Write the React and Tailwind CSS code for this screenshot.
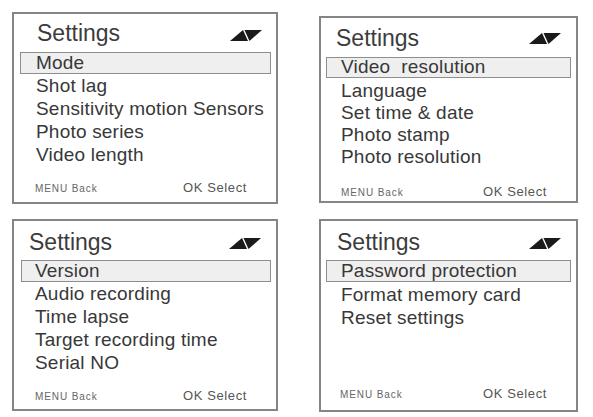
import React from 'react';

const font = { fontFamily: '"Liberation Sans", Arial, sans-serif' };

const panels = [
  {
    items: ['Mode', 'Shot lag', 'Sensitivity motion Sensors', 'Photo series', 'Video length'],
    box: 'w-[266px] h-[192px]',
    title: 'pt-[6px] pl-[23px] pr-[14px]',
    icon: 'mt-[10px]',
    bar: 'mt-[6px] ml-[6px] mr-[5px] h-[22px] pl-[15px]',
    list: 'mt-[1px] pl-[22px]',
    row: 'h-[23px]',
    foot: 'pb-[6px] pl-[21px] pr-[29px]',
  },
  {
    items: ['Video  resolution', 'Language', 'Set time & date', 'Photo stamp', 'Photo resolution'],
    box: 'w-[259px] h-[187px] mt-[4px]',
    title: 'pt-[7px] pl-[15px] pr-[15px]',
    icon: 'mt-[8px]',
    bar: 'mt-[6px] mx-[5px] h-[21px] pl-[14px]',
    list: 'mt-[2px] pl-[20px]',
    row: 'h-[22px]',
    foot: 'pb-[1px] pl-[20px] pr-[29px]',
  },
  {
    items: ['Version', 'Audio recording', 'Time lapse', 'Target recording time', 'Serial NO'],
    box: 'w-[266px] h-[192px]',
    title: 'pt-[8px] pl-[15px] pr-[15px]',
    icon: 'mt-[9px]',
    bar: 'mt-[5px] ml-[7px] mr-[5px] h-[22px] pl-[13px]',
    list: 'mt-[1px] pl-[21px]',
    row: 'h-[23px]',
    foot: 'pb-[5px] pl-[21px] pr-[29px]',
  },
  {
    items: ['Password protection', 'Format memory card', 'Reset settings'],
    box: 'w-[259px] h-[193px]',
    title: 'pt-[8px] pl-[16px] pr-[15px]',
    icon: 'mt-[9px]',
    bar: 'mt-[5px] mx-[5px] h-[22px] pl-[14px]',
    list: 'mt-[2px] pl-[20px]',
    row: 'h-[23px]',
    foot: 'pb-[8px] pl-[19px] pr-[29px]',
  },
];

// up / down arrows shown as two split triangles
const UpDown = () => (
  <svg width="32" height="11" viewBox="0 0 32 11" className="shrink-0">
    <polygon points="0,11 13,0 18,11" fill="#1a1a1a" />
    <polygon points="14.5,0 32,0 19.5,11" fill="#1a1a1a" />
  </svg>
);

const Panel = ({ p }) => {
  const [first, ...rest] = p.items;
  return (
    <div className={`${p.box} flex flex-col border-2 border-[#858585] bg-white`}>
      <div className={`${p.title} flex items-start justify-between`}>
        <span className="text-[23px] leading-[26px] text-[#3c3c3c]">Settings</span>
        <span className={p.icon}><UpDown /></span>
      </div>
      <div className={`${p.bar} flex items-center border border-[#8e8e8e] bg-[#efefef] text-[19px] tracking-[0.2px] text-[#383838] whitespace-pre`}>
        {first}
      </div>
      <div className={p.list}>
        {rest.map((t) => (
          <div key={t} className={`${p.row} flex items-center text-[19px] tracking-[0.2px] text-[#383838] whitespace-pre`}>
            {t}
          </div>
        ))}
      </div>
      <div className={`${p.foot} mt-auto flex h-[16px] items-center justify-between box-content`}>
        <span className="text-[10px] tracking-[0.9px] text-[#666]">MENU Back</span>
        <span className="text-[13px] tracking-[0.6px] text-[#555]">OK Select</span>
      </div>
    </div>
  );
};

export default function App() {
  return (
    <div className="w-[593px] h-[417px] bg-white overflow-hidden" style={font}>
      <div className="flex items-start gap-[41px] pl-[12px] pt-[12px]">
        <Panel p={panels[0]} />
        <Panel p={panels[1]} />
      </div>
      <div className="mt-[15px] flex items-start gap-[41px] pl-[12px]">
        <Panel p={panels[2]} />
        <Panel p={panels[3]} />
      </div>
    </div>
  );
}
